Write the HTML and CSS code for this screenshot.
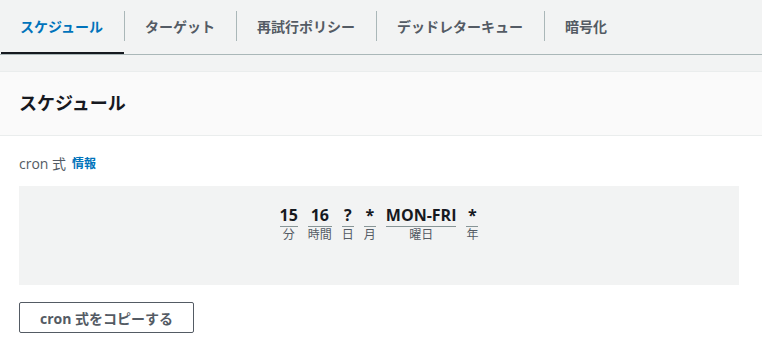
FILE: index.html
```html
<!DOCTYPE html>
<html lang="ja">
<head>
<meta charset="utf-8">
<link rel="stylesheet" href="styles.css">
</head>
<body>
<nav class="tabs">
  <div class="tab active">スケジュール</div>
  <span class="sep"></span>
  <div class="tab">ターゲット</div>
  <span class="sep"></span>
  <div class="tab">再試行ポリシー</div>
  <span class="sep"></span>
  <div class="tab">デッドレターキュー</div>
  <span class="sep"></span>
  <div class="tab">暗号化</div>
</nav>
<section class="card">
  <header class="card-header"><h2 class="title">スケジュール</h2></header>
  <div class="card-body">
    <div class="label-row"><span class="label">cron 式</span><a class="info">情報</a></div>
    <div class="cron-box">
      <div class="cron">
        <div class="field"><span class="val">15</span><span class="lbl">分</span></div>
        <div class="field"><span class="val">16</span><span class="lbl">時間</span></div>
        <div class="field"><span class="val">?</span><span class="lbl">日</span></div>
        <div class="field"><span class="val">*</span><span class="lbl">月</span></div>
        <div class="field"><span class="val">MON-FRI</span><span class="lbl">曜日</span></div>
        <div class="field"><span class="val">*</span><span class="lbl">年</span></div>
      </div>
    </div>
    <button class="btn">cron 式をコピーする</button>
  </div>
</section>
</body>
</html>
```

FILE: styles.css
```css
* { box-sizing: border-box; }
html, body { margin: 0; padding: 0; }
body {
  background: #f2f3f3;
  font-family: "Open Sans", "Noto Sans CJK JP", sans-serif;
  color: #16191f;
  width: 762px;
  height: 349px;
  overflow: hidden;
}
.tabs {
  display: flex;
  align-items: center;
  border-bottom: 1px solid #aab7b8;
  height: 55px;
}
.tab {
  position: relative;
  height: 54px;
  display: flex;
  align-items: center;
  padding: 0 21px 0 20px;
  font-size: 14px;
  font-weight: 700;
  color: #545b64;
  padding-bottom: 2px;
}
.tab.active { color: #0073bb; }
.tab.active::after {
  content: "";
  position: absolute;
  left: 1px;
  right: 0;
  bottom: 0;
  height: 2px;
  background: #16191f;
}
.sep {
  width: 1px;
  height: 30px;
  background: #aab7b8;
  margin-top: -3px;
}
.card {
  margin-top: 16px;
  background: #fff;
  border-top: 1px solid #eaeded;
  height: 278px;
}
.card-header {
  background: #fafafa;
  border-bottom: 1px solid #eaeded;
  height: 64px;
  display: flex;
  align-items: center;
  padding: 0 19px 3px;
}
.title {
  margin: 0;
  font-size: 18px;
  font-weight: 700;
  color: #16191f;
}
.card-body { padding: 16px 23px 0 19px; }
.label-row {
  display: flex;
  align-items: center;
  height: 22px;
  gap: 6px;
}
.label { font-size: 14px; color: #545b64; }
.info { font-size: 12px; font-weight: 700; color: #0073bb; }
.cron-box {
  margin-top: 12px;
  background: #f2f3f3;
  height: 99px;
  padding-top: 19px;
  display: flex;
  justify-content: center;
}
.cron { display: flex; gap: 10px; align-items: flex-start; }
.field { display: flex; flex-direction: column; align-items: stretch; text-align: center; }
.val {
  font-size: 16px;
  font-weight: 700;
  line-height: 21px;
  color: #16191f;
  border-bottom: 1px solid #879596;
}
.lbl {
  font-size: 12px;
  line-height: 16px;
  color: #545b64;
}
.btn {
  margin-top: 17px;
  width: 175px;
  height: 31px;
  border: 1px solid #545b64;
  border-radius: 2px;
  background: #fff;
  font-family: "Open Sans", "Noto Sans CJK JP", sans-serif;
  font-size: 14px;
  font-weight: 700;
  color: #545b64;
  padding: 0;
}
```
